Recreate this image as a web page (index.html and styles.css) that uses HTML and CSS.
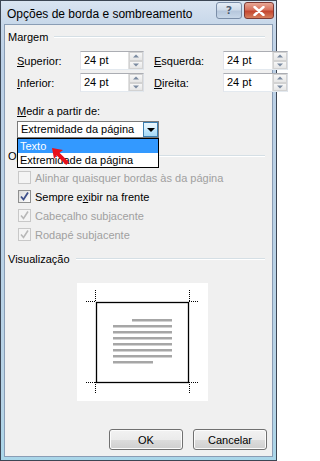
FILE: index.html
```html
<!DOCTYPE html>
<html lang="pt">
<head>
<meta charset="utf-8">
<title>Opções de borda e sombreamento</title>
<link rel="stylesheet" href="styles.css">
</head>
<body>
<div class="window">
  <div class="titlebar">
    <span class="title">Opções de borda e sombreamento</span>
    <div class="caption-buttons">
      <span class="cap-btn help">?</span>
      <span class="cap-btn close">
        <svg width="12" height="10" viewBox="0 0 12 10"><path d="M1.5 1 L10.5 9 M10.5 1 L1.5 9" stroke="#fff" stroke-width="2.4" stroke-linecap="round"/></svg>
      </span>
    </div>
  </div>
  <div class="client">
    <div class="group-head group-margem"><span>Margem</span></div>
    <div class="margin-grid">
      <label class="lbl"><u>S</u>uperior:</label>
      <div class="spin"><span class="val">24 pt</span><span class="arrows"><i class="up"></i><i class="down"></i></span></div>
      <label class="lbl"><u>E</u>squerda:</label>
      <div class="spin"><span class="val">24 pt</span><span class="arrows"><i class="up"></i><i class="down"></i></span></div>
      <label class="lbl"><u>I</u>nferior:</label>
      <div class="spin"><span class="val">24 pt</span><span class="arrows"><i class="up"></i><i class="down"></i></span></div>
      <label class="lbl"><u>D</u>ireita:</label>
      <div class="spin"><span class="val">24 pt</span><span class="arrows"><i class="up"></i><i class="down"></i></span></div>
    </div>
    <div class="medir-label"><u>M</u>edir a partir de:</div>
    <div class="combo-wrap">
      <div class="combo">
        <span class="combo-val">Extremidade da página</span>
        <span class="combo-btn"><i></i></span>
      </div>
      <div class="dropdown">
        <div class="opt selected">Texto</div>
        <div class="opt">Extremidade da página</div>
      </div>
      <svg class="arrow" width="18" height="18" viewBox="0 0 18 18">
        <polygon points="0,0 11,2 7.5,4.7 17,14.2 14.2,17 4.7,7.5 2,11" fill="#e8101c"/>
      </svg>
    </div>
    <div class="group-head group-opcoes"><span>Opções</span></div>
    <div class="checks">
      <div class="chk disabled"><span class="box"></span><span>Alinhar quaisquer bordas às da página</span></div>
      <div class="chk checked"><span class="box"><svg width="11" height="11" viewBox="0 0 11 11"><path d="M2 5.5 L4.5 8.5 L9 1.5" fill="none" stroke="#3d4f8a" stroke-width="1.8"/></svg></span><span>Sempre e<u>x</u>ibir na frente</span></div>
      <div class="chk disabled checked"><span class="box"><svg width="11" height="11" viewBox="0 0 11 11"><path d="M2 5.5 L4.5 8.5 L9 1.5" fill="none" stroke="#b8b8b8" stroke-width="1.6"/></svg></span><span>Cabeçalho subjacente</span></div>
      <div class="chk disabled checked"><span class="box"><svg width="11" height="11" viewBox="0 0 11 11"><path d="M2 5.5 L4.5 8.5 L9 1.5" fill="none" stroke="#b8b8b8" stroke-width="1.6"/></svg></span><span>Rodapé subjacente</span></div>
    </div>
    <div class="group-head group-vis"><span>Visualização</span></div>
    <div class="preview">
      <svg width="131" height="118" viewBox="0 0 131 118">
        <g stroke="#000" stroke-width="1" stroke-dasharray="1 1" fill="none">
          <line x1="18.5" y1="7" x2="18.5" y2="19"/>
          <line x1="9" y1="18.5" x2="19" y2="18.5"/>
          <line x1="112.5" y1="7" x2="112.5" y2="19"/>
          <line x1="112" y1="18.5" x2="122" y2="18.5"/>
          <line x1="18.5" y1="99" x2="18.5" y2="111"/>
          <line x1="9" y1="99.5" x2="19" y2="99.5"/>
          <line x1="112.5" y1="99" x2="112.5" y2="111"/>
          <line x1="112" y1="99.5" x2="122" y2="99.5"/>
        </g>
        <rect x="19.5" y="19.5" width="92" height="80" fill="none" stroke="#000" stroke-width="1.3"/>
        <g fill="#a6a6a6">
          <rect x="55" y="36" width="40" height="2.5"/>
          <rect x="36" y="42" width="59" height="2.5"/>
          <rect x="36" y="48" width="59" height="2.5"/>
          <rect x="36" y="54" width="59" height="2.5"/>
          <rect x="36" y="60" width="59" height="2.5"/>
          <rect x="36" y="66" width="59" height="2.5"/>
          <rect x="36" y="72" width="59" height="2.5"/>
          <rect x="36" y="78" width="40" height="2.5"/>
        </g>
      </svg>
    </div>
    <div class="buttons">
      <button class="btn">OK</button>
      <button class="btn">Cancelar</button>
    </div>
  </div>
</div>
</body>
</html>
```
FILE: styles.css
```css
* { box-sizing: border-box; }
html, body { margin: 0; padding: 0; }
body {
  font-family: "Liberation Sans", Arial, sans-serif;
  font-size: 11px;
  color: #000;
  background: #fff;
}
u { text-decoration: underline; text-underline-offset: 1px; }

.window {
  width: 277px;
  height: 461px;
  border: 1px solid #3c4654;
  background: linear-gradient(to bottom, #d9e4f1 0px, #c7d7e9 24px, #bcd0e6 60px, #b7d3e6 400px, #a9d6e9 100%);
  display: flex;
  flex-direction: column;
  padding: 0 3px 3px 3px;
}

.titlebar {
  height: 23px;
  display: flex;
  align-items: center;
  justify-content: space-between;
  margin: 0 -3px;
  padding: 0 2px 0 6px;
}
.title {
  font-size: 12px;
  color: #000;
  margin-top: 2px;
}
.caption-buttons {
  display: flex;
  gap: 2px;
  align-self: flex-start;
  margin-top: 1px;
}
.cap-btn {
  height: 17px;
  border-radius: 3px;
  display: flex;
  align-items: center;
  justify-content: center;
}
.help {
  width: 26px;
  border: 1px solid #7b8ea8;
  background: linear-gradient(to bottom, #e5edf6 0%, #cfdbe9 45%, #b6c7dc 55%, #c8d7e8 100%);
  color: #4d5d73;
  font-family: "DejaVu Sans", sans-serif;
  font-size: 11px;
  font-weight: bold;
  text-shadow: 0 0 1px #fff;
}
.close {
  width: 30px;
  border: 1px solid #7c3a35;
  background: linear-gradient(to bottom, #e7a795 0%, #d6715d 45%, #c4462f 55%, #d57f5e 100%);
}

.client {
  flex: 1;
  background: #f0f0f0;
  border: 1px solid #8a9db5;
  display: flex;
  flex-direction: column;
  padding: 0 5px 0 3px;
  position: relative;
}

.group-head {
  height: 15px;
  line-height: 15px;
  display: flex;
  align-items: center;
  gap: 6px;
  padding-right: 2px;
}
.group-head::after {
  content: "";
  flex: 1;
  height: 1px;
  background: #d5dfe5;
  border-bottom: 1px solid #fff;
  margin-top: -2px;
}
.group-margem { margin-top: 5px; }
.group-opcoes { margin-top: 11px; }
.group-vis { margin-top: 8px; }

.margin-grid {
  margin-top: 6px;
  display: grid;
  grid-template-columns: 53px 64px 59px 65px;
  column-gap: 10px;
  row-gap: 3px;
  padding-left: 9px;
  grid-auto-rows: 19px;
  align-items: center;
}

.spin {
  height: 19px;
  border: 1px solid #abadb3;
  border-bottom-color: #e3e9ef;
  border-right-color: #dbdfe6;
  border-left-color: #e2e3ea;
  background: #fff;
  display: flex;
  align-items: center;
  justify-content: space-between;
  padding-left: 3px;
}
.val { line-height: 17px; }
.arrows {
  width: 15px;
  height: 17px;
  display: flex;
  flex-direction: column;
  border-left: 1px solid #e0e0e0;
}
.arrows i {
  flex: 1;
  position: relative;
  background: linear-gradient(to bottom, #f7f7f7, #e6e6e6);
  border: 1px solid #d2d2d2;
}
.arrows i::after {
  content: "";
  position: absolute;
  left: 50%;
  top: 50%;
  transform: translate(-50%, -50%);
  border-left: 3px solid transparent;
  border-right: 3px solid transparent;
}
.arrows i.up::after { border-bottom: 3px solid #7a8aa0; }
.arrows i.down::after { border-top: 3px solid #7a8aa0; }

.medir-label {
  margin-top: 12px;
  height: 15px;
  line-height: 15px;
  padding-left: 9px;
}

.combo-wrap {
  margin-top: 2px;
  margin-left: 9px;
  width: 142px;
  position: relative;
}
.combo {
  height: 17px;
  border: 1px solid #7a7a7a;
  background: #fff;
  display: flex;
  align-items: center;
  justify-content: space-between;
  padding-left: 3px;
}
.combo-val { line-height: 15px; }
.combo-btn {
  width: 15px;
  height: 15px;
  border: 1px solid #3c7fb1;
  background: linear-gradient(to bottom, #eaf6fd 0%, #d9f0fc 45%, #bee6fd 55%, #a7d9f5 100%);
  display: flex;
  align-items: center;
  justify-content: center;
}
.combo-btn i {
  border-left: 4px solid transparent;
  border-right: 4px solid transparent;
  border-top: 4px solid #000;
}

.dropdown {
  position: absolute;
  left: 0;
  top: 17px;
  width: 142px;
  background: #fff;
  border: 1px solid #000;
  z-index: 2;
}
.opt {
  height: 14px;
  line-height: 14px;
  padding-left: 2px;
}
.opt.selected {
  background: #3399ff;
  color: #fff;
}
.arrow {
  position: absolute;
  left: 35px;
  top: 27px;
  z-index: 3;
}

.checks {
  margin-top: 4px;
  padding-left: 10px;
  display: flex;
  flex-direction: column;
}
.chk {
  height: 19px;
  display: flex;
  align-items: center;
  gap: 4px;
}
.box {
  width: 13px;
  height: 13px;
  border: 1px solid #8e8f8f;
  background: linear-gradient(135deg, #dcdcdc, #fdfdfd);
  display: flex;
  align-items: center;
  justify-content: center;
}
.chk.disabled { color: #a0a0a0; }
.chk.disabled .box {
  border-color: #c8c8c8;
  background: #f4f4f4;
}

.preview {
  margin-top: 16px;
  margin-left: 69px;
  width: 131px;
  height: 118px;
  background: #fff;
}
.preview svg { display: block; }

.buttons {
  margin-top: 28px;
  display: flex;
  justify-content: flex-end;
  gap: 10px;
}
.btn {
  width: 74px;
  height: 21px;
  font-family: "Liberation Sans", Arial, sans-serif;
  font-size: 11px;
  color: #000;
  border: 1px solid #707070;
  border-radius: 3px;
  background: linear-gradient(to bottom, #f2f2f2 0%, #ebebeb 50%, #dddddd 51%, #cfcfcf 100%);
  box-shadow: inset 0 0 0 1px #fcfcfc;
  padding: 0;
}
```
